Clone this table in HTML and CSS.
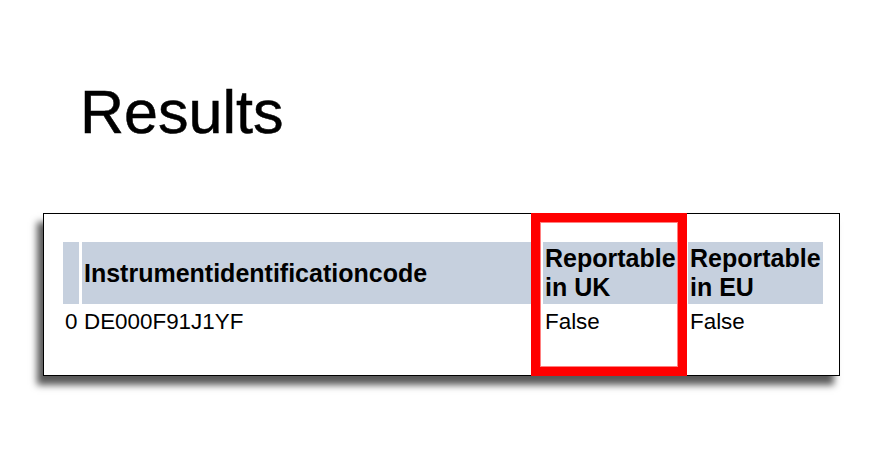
FILE: index.html
```html
<!DOCTYPE html>
<html>
<head>
<meta charset="utf-8">
<title>Results</title>
<link rel="stylesheet" href="styles.css">
</head>
<body>
<div class="page">
  <h1 class="title">Results</h1>
  <div class="card">
    <table class="results">
      <colgroup>
        <col class="c-idx">
        <col class="c-code">
        <col class="c-uk">
        <col class="c-eu">
      </colgroup>
      <thead>
        <tr>
          <th></th>
          <th>Instrumentidentificationcode</th>
          <th>Reportable in UK</th>
          <th>Reportable in EU</th>
        </tr>
      </thead>
      <tbody>
        <tr>
          <td>0</td>
          <td>DE000F91J1YF</td>
          <td>False</td>
          <td>False</td>
        </tr>
      </tbody>
    </table>
    <div class="highlight"></div>
  </div>
</div>
</body>
</html>
```

FILE: styles.css
```css
html, body {
  margin: 0;
  padding: 0;
  background: #ffffff;
}

body {
  min-height: 468px;
}

.page {
  padding: 77px 0 60px 43px;
  font-family: "Liberation Sans", Arial, sans-serif;
  color: #000;
}

.title {
  margin: 0 0 66px 37px;
  font-size: 61px;
  font-weight: normal;
  line-height: 70px;
  height: 70px;
  -webkit-text-stroke: 0.5px #000;
}

.card {
  position: relative;
  box-sizing: border-box;
  width: 797px;
  height: 163px;
  border: 1px solid #000;
  background: #fff;
  padding: 25px 0 0 16px;
  box-shadow: -6px 9px 7px #5a5a5a;
}

.results {
  border-collapse: separate;
  border-spacing: 3px;
  table-layout: fixed;
  width: 766px;
}

.c-idx { width: 16px; }
.c-code { width: 458px; }
.c-uk { width: 142px; }
.c-eu { width: 135px; }

.results th {
  background: #c6d0de;
  font-size: 25px;
  font-weight: bold;
  line-height: 29px;
  text-align: left;
  vertical-align: middle;
  padding: 2px 2px;
  white-space: normal;
}

.results td {
  font-size: 22.4px;
  line-height: 25px;
  text-align: left;
  padding: 2px 2px;
}

.highlight {
  position: absolute;
  left: 487px;
  top: -1px;
  width: 156px;
  height: 163px;
  box-sizing: border-box;
  border: 9px solid #ff0000;
  box-shadow: inset 0 0 0 1px #ff8080;
}
```
